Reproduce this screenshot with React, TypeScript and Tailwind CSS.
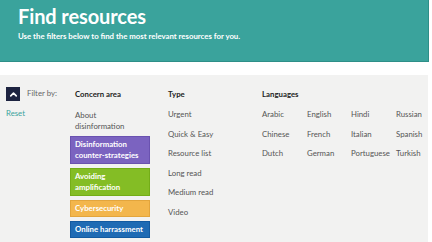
import { ChevronUp } from "lucide-react";

const types = ["Urgent", "Quick & Easy", "Resource list", "Long read", "Medium read", "Video"];

const languages = [
  ["Arabic", "English", "Hindi", "Russian"],
  ["Chinese", "French", "Italian", "Spanish"],
  ["Dutch", "German", "Portuguese", "Turkish"],
];

const concerns = [
  { label: "Disinformation counter-strategies", cls: "bg-[#7b63c0] border-[#6a52b0]" },
  { label: "Avoiding amplification", cls: "bg-[#84bd25] border-[#74ad18]" },
  { label: "Cybersecurity", cls: "bg-[#f3b64c] border-[#e3a53c]" },
  { label: "Online harrassment", cls: "bg-[#1f6bb4] border-[#135aa0]" },
];

export default function App() {
  return (
    <div className="w-[432px] h-[242px] bg-white overflow-hidden font-['Lato',sans-serif]">
      <div className="w-[429px] h-[62px] bg-[#3aa39c] border-r border-b border-[#2e8f88] pl-[18px] pt-[4px]">
        <h1 className="text-[20px] font-bold text-white leading-[24px] tracking-[-0.1px]">Find resources</h1>
        <p className="text-[7.8px] font-bold text-white leading-[10px] mt-[3px]">
          Use the filters below to find the most relevant resources for you.
        </p>
      </div>

      <div className="mt-[13px] w-[428px] h-[167px] bg-[#f2f2f1] flex pt-[12px] text-[7.8px] text-[#555]">
        <div className="w-[70px] shrink-0 pl-[6px] flex flex-col">
          <div className="flex items-center gap-[7px] h-[14px]">
            <div className="w-[14px] h-[14px] bg-[#1d2340] flex items-center justify-center">
              <ChevronUp className="w-[11px] h-[11px] text-white" strokeWidth={3.5} />
            </div>
            <span className="text-[#666]">Filter by:</span>
          </div>
          <button className="text-left text-[#3aa39c] mt-[6px] leading-[12px]">Reset</button>
        </div>

        <div className="w-[80px] shrink-0 flex flex-col">
          <div className="pl-[5px] font-bold text-[#222] leading-[14px]">Concern area</div>
          <div className="pl-[5px] mt-[9px] leading-[10.5px]">
            About
            <br />
            disinformation
          </div>
          <div className="flex flex-col gap-[4px] mt-[5px]">
            {concerns.map((c) => (
              <div
                key={c.label}
                className={`${c.cls} border px-[4px] py-[2px] text-white font-bold leading-[11px]`}
              >
                {c.label}
              </div>
            ))}
          </div>
        </div>

        <div className="w-[112px] shrink-0 pl-[18px] flex flex-col">
          <div className="font-bold text-[#222] leading-[14px]">Type</div>
          <div className="mt-[4px]">
            {types.map((t) => (
              <div key={t} className="h-[19.6px] flex items-center">
                {t}
              </div>
            ))}
          </div>
        </div>

        <div className="flex-1 min-w-0 flex flex-col">
          <div className="font-bold text-[#222] leading-[14px]">Languages</div>
          <div className="mt-[4px]">
            {languages.map((row, i) => (
              <div key={i} className="grid grid-cols-[45px_44px_45px_32px] h-[19.6px] items-center">
                {row.map((l) => (
                  <span key={l} className="whitespace-nowrap">{l}</span>
                ))}
              </div>
            ))}
          </div>
        </div>
      </div>
    </div>
  );
}
